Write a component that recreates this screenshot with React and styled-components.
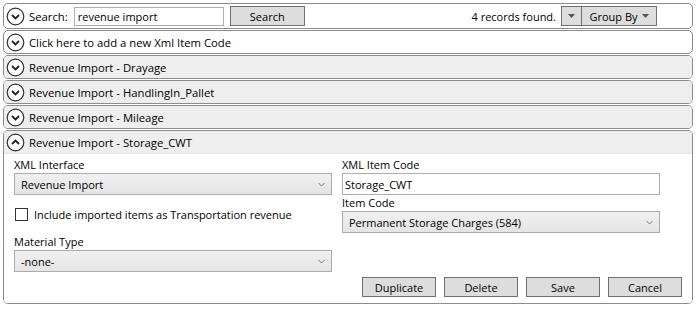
import React from 'react'
import styled, { createGlobalStyle } from 'styled-components';

const Global = createGlobalStyle`
   body {
      margin: 0;
      background: #fff;
      font-family: "Open Sans", "Liberation Sans", sans-serif;
      font-size: 11px;
      color: #000;
   }
`

const Page = styled.div`
   padding: 3px 6px 0 3px;
   display: flex;
   flex-direction: column;
   gap: 1px;
`

const Panel = styled.section`
   border: 1px solid #8c8c8c;
   border-radius: 5px;
   background: ${({ shaded }) => (shaded ? '#eeeeee' : '#ffffff')};
   overflow: hidden;
`

const Header = styled.div`
   display: flex;
   align-items: center;
   height: ${({ tall }) => (tall ? '24px' : '22px')};
   padding: 0 4px 0 2px;
   gap: 4px;
   background: ${({ shaded }) => (shaded ? '#eeeeee' : 'transparent')};
`

const Title = styled.span`
   white-space: nowrap;
   font-size: 11.3px;
`

const SearchInput = styled.input`
   width: 150px;
   height: 19px;
   box-sizing: border-box;
   border: 1px solid #acacac;
   font: inherit;
   padding: 0 3px;
   margin-left: 2px;
   outline: none;
`

const Button = styled.button`
   font: inherit;
   height: 20px;
   box-sizing: border-box;
   width: ${({ w }) => w || '74px'};
   background: #dddddd;
   border: 1px solid #707070;
   border-left: ${({ joined }) => (joined ? 'none' : '1px solid #707070')};
   margin-left: ${({ offset }) => offset || '0'};
   padding: 0;
   color: #000;
   display: flex;
   align-items: center;
   justify-content: center;
   gap: 4px;
`

const Spacer = styled.div`
   flex: 1;
`

const Found = styled.span`
   margin-right: 1px;
`

const SplitGroup = styled.div`
   display: flex;
   margin-right: 31px;
`

const Body = styled.div`
   background: #fff;
   border-top: 1px solid #e4e4e4;
   padding: 3px 10px 6px 10px;
   display: flex;
   flex-direction: column;
`

const Columns = styled.div`
   display: grid;
   grid-template-columns: 318px 318px;
   column-gap: 10px;
`

const Column = styled.div`
   display: flex;
   flex-direction: column;
`

const Label = styled.div`
   height: 16px;
   line-height: 16px;
`

const Field = styled.div`
   height: 22px;
   box-sizing: border-box;
   border: 1px solid ${({ select }) => (select ? '#acacac' : '#abadb3')};
   background: ${({ select }) => (select ? 'linear-gradient(#f0f0f0, #e5e5e5)' : '#fff')};
   display: flex;
   align-items: center;
   padding: 0 ${({ select }) => (select ? '6px' : '2px')};
`

const FieldText = styled.span`
   flex: 1;
`

const CheckRow = styled.label`
   display: flex;
   align-items: center;
   gap: 6px;
   height: 18px;
   margin: 10px 0 11px 1px;
`

const Box = styled.span`
   width: 13px;
   height: 13px;
   box-sizing: border-box;
   border: 1px solid #333;
   background: #fff;
`

const Actions = styled.div`
   display: flex;
   justify-content: flex-end;
   gap: 8px;
   margin-top: 5px;
`

const Chevron = ({ up }) => (
   <svg width="19" height="19" viewBox="0 0 19 19">
      <circle cx="9.5" cy="9.5" r="8.3" fill="#fff" stroke="#333" strokeWidth="1.2" />
      <path d={up ? 'M6 11 L9.5 7.5 L13 11' : 'M6 8 L9.5 11.5 L13 8'} fill="none" stroke="#222" strokeWidth="1.8" />
   </svg>
)

const SmallArrow = ({ color = '#555' }) => (
   <svg width="7" height="4" viewBox="0 0 7 4">
      <path d="M0 0 L7 0 L3.5 4 Z" fill={color} />
   </svg>
)

const Caret = () => (
   <svg width="7" height="5" viewBox="0 0 7 5">
      <path d="M0.5 1 L3.5 4 L6.5 1" fill="none" stroke="#777" strokeWidth="1" />
   </svg>
)

const collapsed = ['Drayage', 'HandlingIn_Pallet', 'Mileage']

const App = () => {
   return (
      <>
         <Global />
         <Page>
            <Panel>
               <Header tall>
                  <Chevron />
                  <Title>Search:</Title>
                  <SearchInput defaultValue="revenue import" />
                  <Button w="75px" offset="2px">Search</Button>
                  <Spacer />
                  <Found>4 records found.</Found>
                  <SplitGroup>
                     <Button w="21px"><SmallArrow /></Button>
                     <Button w="75px" joined>Group By <SmallArrow /></Button>
                  </SplitGroup>
               </Header>
            </Panel>
            <Panel>
               <Header>
                  <Chevron />
                  <Title>Click here to add a new Xml Item Code</Title>
               </Header>
            </Panel>
            {collapsed.map(name => (
               <Panel shaded key={name}>
                  <Header shaded>
                     <Chevron />
                     <Title>Revenue Import - {name}</Title>
                  </Header>
               </Panel>
            ))}
            <Panel>
               <Header shaded>
                  <Chevron up />
                  <Title>Revenue Import - Storage_CWT</Title>
               </Header>
               <Body>
                  <Columns>
                     <Column>
                        <Label>XML Interface</Label>
                        <Field select>
                           <FieldText>Revenue Import</FieldText>
                           <Caret />
                        </Field>
                        <CheckRow>
                           <Box />
                           Include imported items as Transportation revenue
                        </CheckRow>
                        <Label>Material Type</Label>
                        <Field select>
                           <FieldText>-none-</FieldText>
                           <Caret />
                        </Field>
                     </Column>
                     <Column>
                        <Label>XML Item Code</Label>
                        <Field>
                           <FieldText>Storage_CWT</FieldText>
                        </Field>
                        <Label>Item Code</Label>
                        <Field select>
                           <FieldText>Permanent Storage Charges (584)</FieldText>
                           <Caret />
                        </Field>
                     </Column>
                  </Columns>
                  <Actions>
                     <Button>Duplicate</Button>
                     <Button>Delete</Button>
                     <Button>Save</Button>
                     <Button>Cancel</Button>
                  </Actions>
               </Body>
            </Panel>
         </Page>
      </>
   )
}

export default App
